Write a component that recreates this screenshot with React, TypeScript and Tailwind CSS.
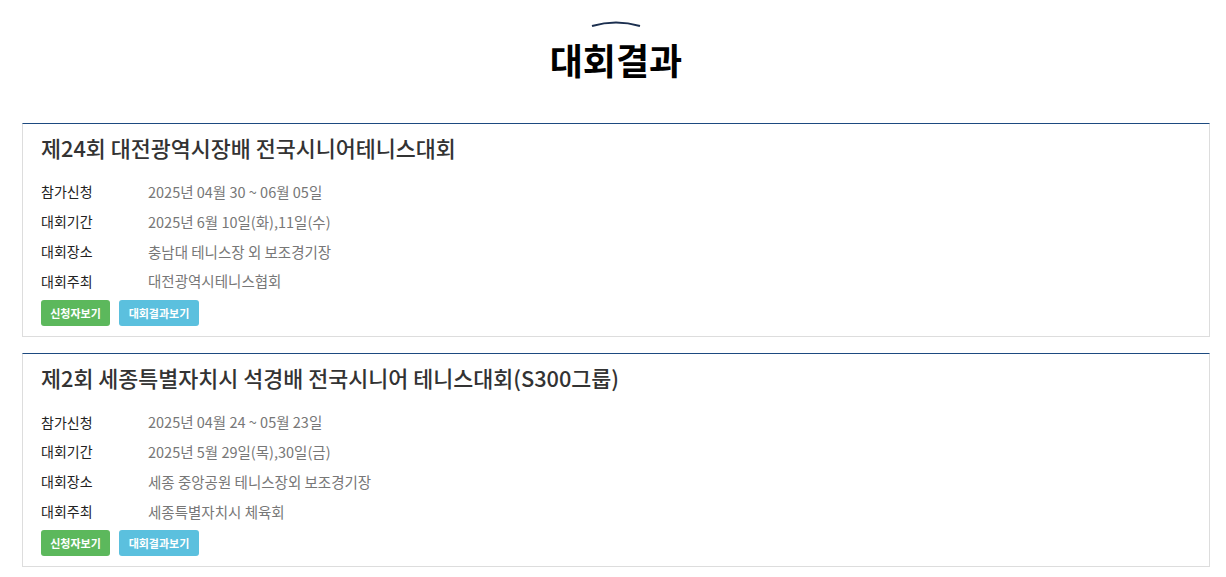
import React from "react"

interface Tournament {
  title: string
  apply: string
  period: string
  place: string
  host: string
}

const tournaments: Tournament[] = [
  {
    title: "제24회 대전광역시장배 전국시니어테니스대회",
    apply: "2025년 04월 30 ~ 06월 05일",
    period: "2025년 6월 10일(화),11일(수)",
    place: "충남대 테니스장 외 보조경기장",
    host: "대전광역시테니스협회",
  },
  {
    title: "제2회 세종특별자치시 석경배 전국시니어 테니스대회(S300그룹)",
    apply: "2025년 04월 24 ~ 05월 23일",
    period: "2025년 5월 29일(목),30일(금)",
    place: "세종 중앙공원 테니스장외 보조경기장",
    host: "세종특별자치시 체육회",
  },
]

function InfoRow({ label, value }: { label: string; value: string }) {
  return (
    <div className="flex h-[29.8px] items-center">
      <span className="w-[107px] text-[14px] text-[#222]">{label}</span>
      <span className="text-[14.5px] text-[#777]">{value}</span>
    </div>
  )
}

function TournamentCard({ t }: { t: Tournament }) {
  return (
    <div className="border border-[#ddd] border-t-[#1d4a80] bg-white px-[18px] pt-[8px] pb-[10px]">
      <h3 className="text-[21.75px] leading-[31px] font-medium text-[#333]">{t.title}</h3>

      <div className="mt-[14px]">
        <InfoRow label="참가신청" value={t.apply} />
        <InfoRow label="대회기간" value={t.period} />
        <InfoRow label="대회장소" value={t.place} />
        <InfoRow label="대회주최" value={t.host} />
      </div>

      <div className="mt-[4px] flex gap-[9px]">
        <button className="h-[26px] w-[69px] rounded-[3px] bg-[#5cb85c] text-[11px] font-bold text-white">
          신청자보기
        </button>
        <button className="h-[26px] w-[80px] rounded-[3px] bg-[#5bc0de] text-[11px] font-bold text-white">
          대회결과보기
        </button>
      </div>
    </div>
  )
}

export default function App() {
  return (
    <div
      className="min-h-[577px] bg-white"
      style={{ fontFamily: '"Noto Sans CJK KR", "Noto Sans", sans-serif' }}
    >
      {/* Header */}
      <div className="flex flex-col items-center pt-[21px] pl-[6px]">
        <svg width="50" height="6" viewBox="0 0 50 6">
          <path d="M1 5 Q25 -2 49 5" stroke="#1b2f4f" strokeWidth="2" fill="none" />
        </svg>
        <h1 className="mt-[7px] text-[36px] leading-[50px] font-bold text-black">대회결과</h1>
      </div>

      {/* List */}
      <div className="ml-[22px] mr-[16px] mt-[39px] flex flex-col gap-[16px]">
        {tournaments.map((t) => (
          <TournamentCard key={t.title} t={t} />
        ))}
      </div>
    </div>
  )
}
